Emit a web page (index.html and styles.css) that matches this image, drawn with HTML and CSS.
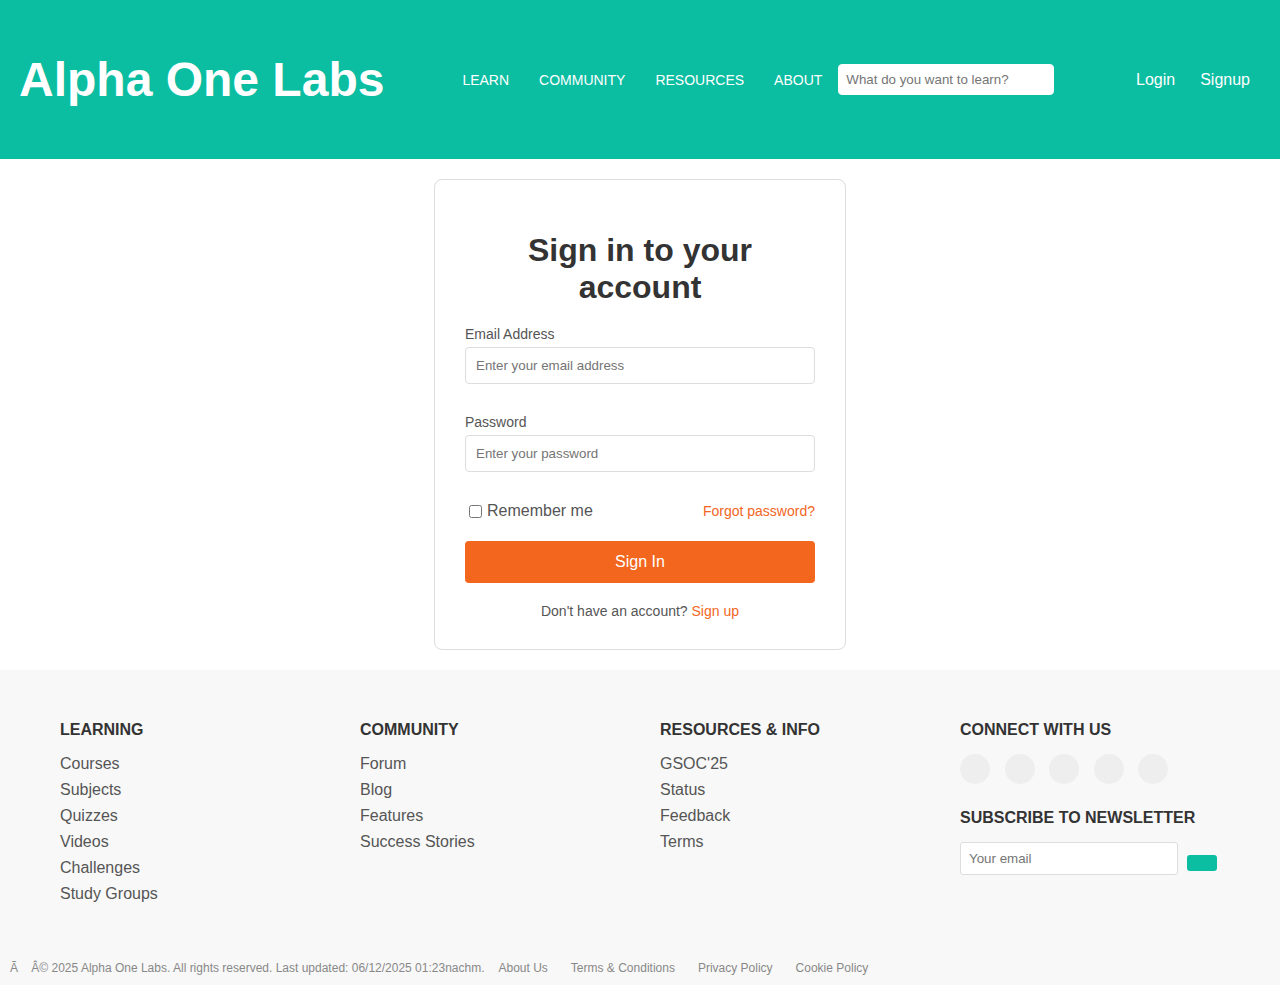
FILE: index.html
```html
<!DOCTYPE html>
<html lang="en">
<head>
<meta charset="utf-8">
<title>Sign in - Alpha One Labs</title>
<link rel="stylesheet" href="styles.css">
</head>
<body>
<header class="site-header">
  <a class="logo" href="#">Alpha One Labs</a>
  <nav class="main-nav">
    <a href="#">LEARN</a>
    <a href="#">COMMUNITY</a>
    <a href="#">RESOURCES</a>
    <a href="#">ABOUT</a>
  </nav>
  <input class="search" type="text" placeholder="What do you want to learn?">
  <div class="auth">
    <a href="#">Login</a>
    <a href="#">Signup</a>
  </div>
</header>

<main class="main">
  <div class="card">
    <h2 class="card-title">Sign in to your account</h2>
    <form class="form">
      <div class="field">
        <label class="label">Email Address</label>
        <input class="input" type="email" placeholder="Enter your email address">
      </div>
      <div class="field">
        <label class="label">Password</label>
        <input class="input" type="password" placeholder="Enter your password">
      </div>
      <div class="row">
        <label class="remember"><input type="checkbox" class="check"> Remember me</label>
        <a class="forgot" href="#">Forgot password?</a>
      </div>
      <button type="button" class="btn">Sign In</button>
      <p class="alt">Don't have an account? <a href="#">Sign up</a></p>
    </form>
  </div>
</main>

<footer class="footer">
  <div class="footer-grid">
    <div class="col">
      <h3 class="col-title">LEARNING</h3>
      <ul class="links">
        <li><a href="#">Courses</a></li>
        <li><a href="#">Subjects</a></li>
        <li><a href="#">Quizzes</a></li>
        <li><a href="#">Videos</a></li>
        <li><a href="#">Challenges</a></li>
        <li><a href="#">Study Groups</a></li>
      </ul>
    </div>
    <div class="col">
      <h3 class="col-title">COMMUNITY</h3>
      <ul class="links">
        <li><a href="#">Forum</a></li>
        <li><a href="#">Blog</a></li>
        <li><a href="#">Features</a></li>
        <li><a href="#">Success Stories</a></li>
      </ul>
    </div>
    <div class="col">
      <h3 class="col-title">RESOURCES &amp; INFO</h3>
      <ul class="links">
        <li><a href="#">GSOC'25</a></li>
        <li><a href="#">Status</a></li>
        <li><a href="#">Feedback</a></li>
        <li><a href="#">Terms</a></li>
      </ul>
    </div>
    <div class="col">
      <h3 class="col-title">CONNECT WITH US</h3>
      <div class="social">
        <span class="dot"></span><span class="dot"></span><span class="dot"></span><span class="dot"></span><span class="dot"></span>
      </div>
      <h3 class="col-title news-title">SUBSCRIBE TO NEWSLETTER</h3>
      <div class="news">
        <input class="news-input" type="email" placeholder="Your email">
        <button type="button" class="news-btn"></button>
      </div>
    </div>
  </div>
  <div class="bottom">
    <span>Ã&nbsp;&nbsp;&nbsp; Â© 2025 Alpha One Labs. All rights reserved. Last updated: 06/12/2025 01:23nachm.</span>
    <a href="#">About Us</a>
    <a href="#">Terms &amp; Conditions</a>
    <a href="#">Privacy Policy</a>
    <a href="#">Cookie Policy</a>
  </div>
</footer>
</body>
</html>
```

FILE: styles.css
```css
* { box-sizing: border-box; }

body {
  margin: 0;
  font-family: "Liberation Sans", Arial, sans-serif;
  color: #333;
  background: #fff;
}

a { text-decoration: none; }

.site-header {
  display: flex;
  align-items: center;
  height: 159px;
  padding: 0 30px 0 19px;
  background: #0bbda1;
}

.logo {
  color: #fff;
  font-size: 48px;
  font-weight: bold;
  line-height: 1;
}

.main-nav {
  display: flex;
  gap: 30px;
  margin-left: 78px;
}

.main-nav a {
  color: #fff;
  font-size: 14px;
}

.search {
  margin-left: 16px;
  width: 216px;
  height: 31px;
  padding: 7px;
  border: 1px solid #fff;
  border-radius: 4px;
  font-family: "Liberation Sans", Arial, sans-serif;
  font-size: 13.333px;
  background: #fff;
}

.auth {
  display: flex;
  gap: 25px;
  margin-left: auto;
}

.auth a {
  color: #fff;
  font-size: 16px;
}

.main {
  display: flex;
  justify-content: center;
  padding: 20px 0;
}

.card {
  width: 412px;
  padding: 30px;
  border: 1px solid #ddd;
  border-radius: 8px;
  background: #fff;
}

.card-title {
  margin: 22px 0 20px;
  text-align: center;
  font-size: 32px;
  font-weight: bold;
  color: #333;
}

.form { margin: 0; }

.field { margin-bottom: 30px; }

.label {
  display: block;
  margin-bottom: 5px;
  font-size: 14px;
  color: #555;
}

.input {
  display: block;
  width: 100%;
  height: 37px;
  padding: 10px;
  border: 1px solid #ddd;
  border-radius: 4px;
  font-family: "Liberation Sans", Arial, sans-serif;
  font-size: 13.333px;
}

.row {
  display: flex;
  justify-content: space-between;
  align-items: center;
  height: 18px;
  margin-bottom: 21px;
}

.remember {
  display: flex;
  align-items: center;
  font-size: 16px;
  color: #555;
}

.check {
  margin: 0 5px 0 4px;
  width: 13px;
  height: 13px;
}

.forgot {
  font-size: 14px;
  color: #f2661e;
}

.btn {
  display: block;
  width: 100%;
  height: 42px;
  border: none;
  border-radius: 4px;
  background: #f2661e;
  color: #fff;
  font-family: "Liberation Sans", Arial, sans-serif;
  font-size: 16px;
}

.alt {
  margin: 20px 0 0;
  text-align: center;
  font-size: 14px;
  color: #555;
}

.alt a { color: #f2661e; }

.footer {
  background: #f8f8f8;
  padding: 51px 0 10px;
}

.footer-grid {
  display: grid;
  grid-template-columns: repeat(4, 1fr);
  gap: 40px;
  padding: 0 60px;
}

.col-title {
  margin: 0 0 12px;
  font-size: 16px;
  font-weight: bold;
  color: #333;
  line-height: 18px;
}

.links {
  list-style: none;
  margin: 0;
  padding: 0;
}

.links li { line-height: 26px; }

.links a {
  font-size: 16px;
  color: #555;
}

.social {
  display: flex;
  gap: 14.5px;
  padding-top: 3px;
}

.dot {
  width: 30px;
  height: 30px;
  border-radius: 50%;
  background: #eee;
}

.news-title { margin-top: 25px; margin-bottom: 15px; }

.news {
  display: flex;
  align-items: flex-start;
  gap: 9px;
}

.news-input {
  width: 218px;
  height: 33px;
  padding: 8px;
  border: 1px solid #ddd;
  border-radius: 3px;
  font-family: "Liberation Sans", Arial, sans-serif;
  font-size: 13.333px;
  background: #fff;
}

.news-btn {
  width: 30px;
  height: 16px;
  margin-top: 13px;
  border: none;
  border-radius: 3px;
  background: #0bbda1;
}

.bottom {
  display: flex;
  align-items: center;
  margin-top: 54px;
  padding: 0 10px;
  font-size: 12px;
  color: #888;
  line-height: 14px;
}

.bottom a {
  color: #888;
  margin-left: 23px;
}

.bottom a:first-of-type { margin-left: 14px; }
```
